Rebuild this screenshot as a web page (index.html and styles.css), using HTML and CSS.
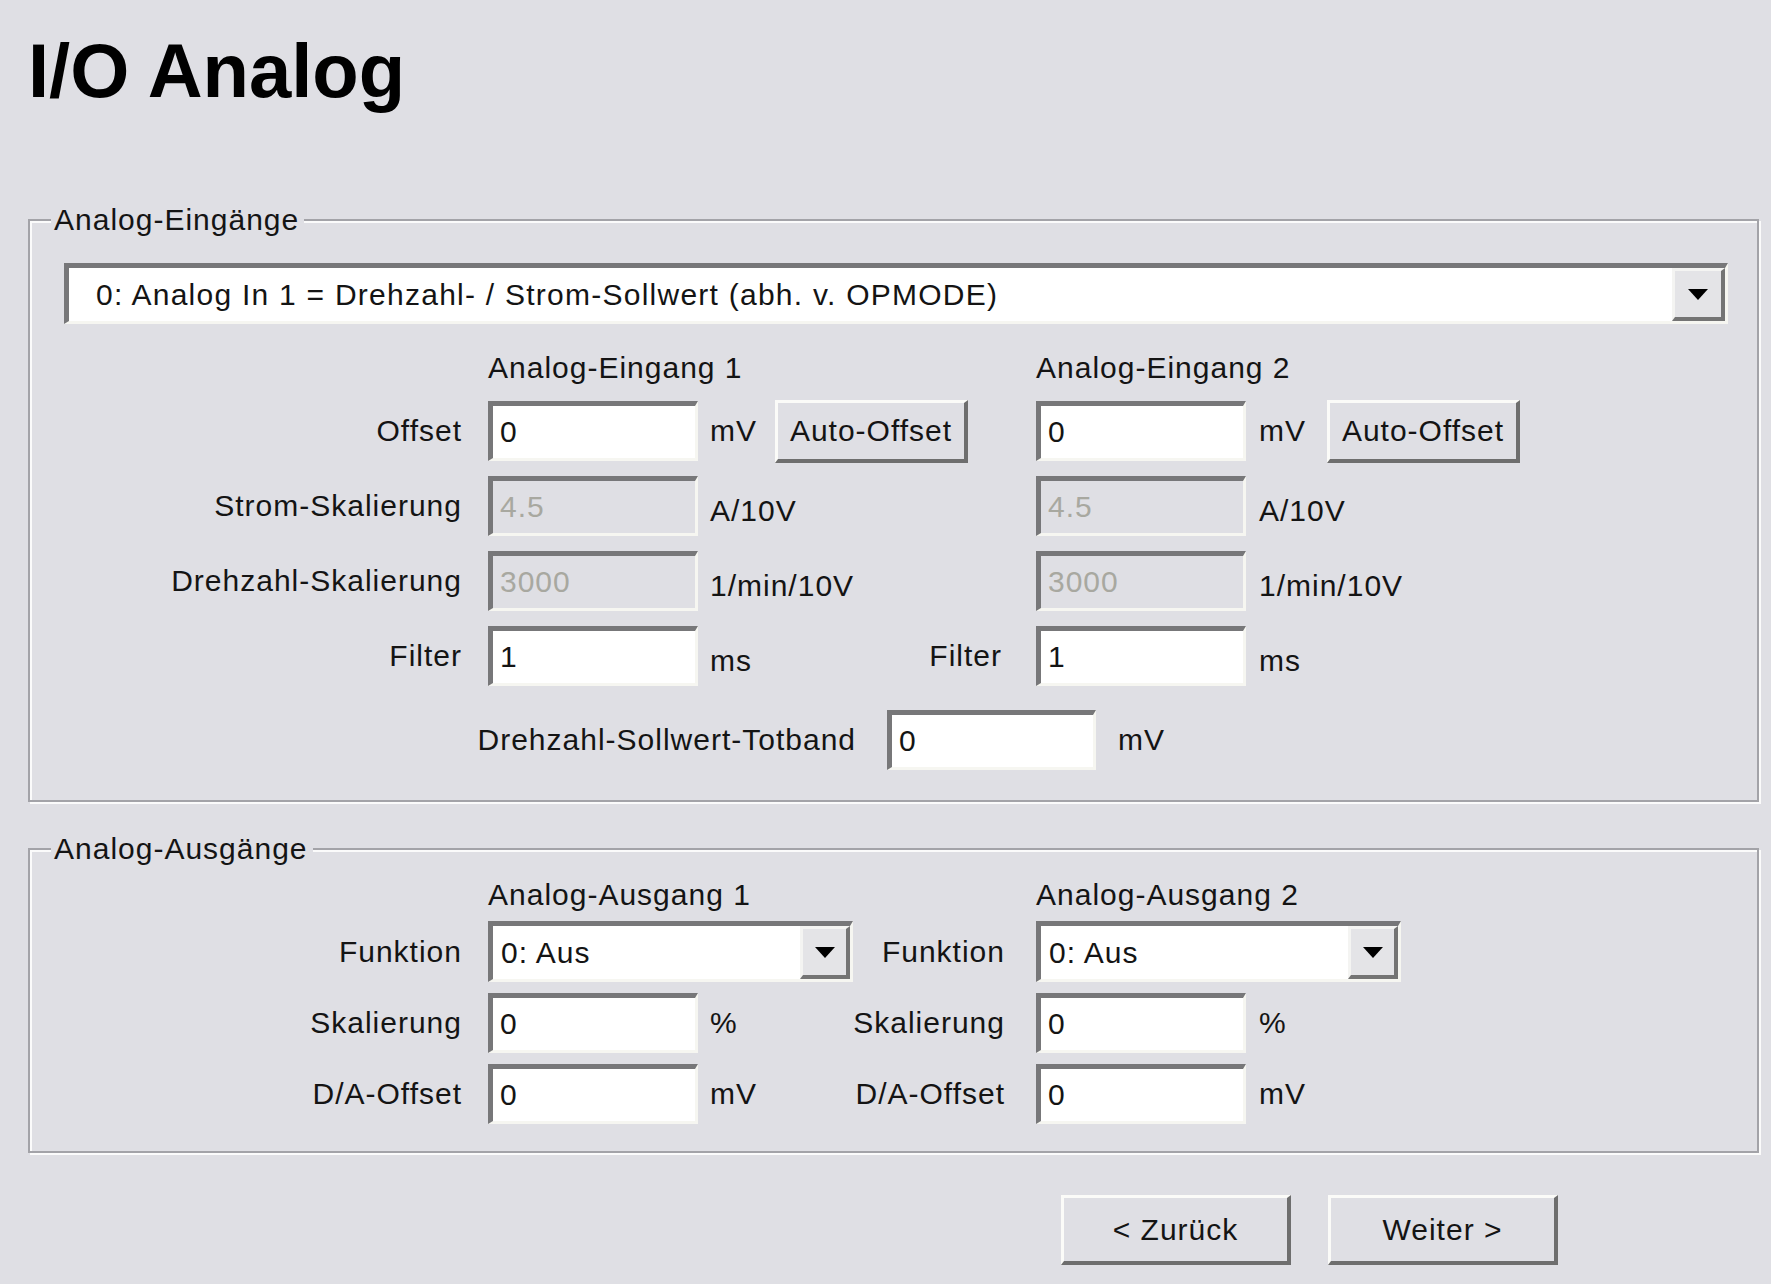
FILE: index.html
```html
<!DOCTYPE html>
<html lang="de">
<head>
    <meta charset="UTF-8">
    <title>I/O Analog</title>
    <link rel="stylesheet" href="styles.css">
</head>
<body>
    <div class="page">
        <h1 class="page-title">I/O Analog</h1>

        <fieldset class="group">
            <legend>Analog-Eingänge</legend>
            <div class="group-body group-in">
                <div class="combo combo-wide">
                    <span class="combo-text">0: Analog In 1 = Drehzahl- / Strom-Sollwert (abh. v. OPMODE)</span>
                    <span class="combo-btn"><svg width="20" height="11" viewBox="0 0 20 11"><path d="M0 0h20L10 11z" fill="#000"/></svg></span>
                </div>

                <div class="grid-in">
                    <div></div>
                    <div class="col-head">Analog-Eingang 1</div>
                    <div></div>
                    <div class="col-head">Analog-Eingang 2</div>
                    <div></div>

                    <label class="lbl">Offset</label>
                    <div class="pair"><input class="field" type="text" value="0"><span class="unit">mV</span></div>
                    <div class="cell"><button class="btn btn-auto">Auto-Offset</button></div>
                    <div class="pair"><input class="field" type="text" value="0"><span class="unit unit-2">mV</span></div>
                    <div class="cell"><button class="btn btn-auto">Auto-Offset</button></div>

                    <label class="lbl">Strom-Skalierung</label>
                    <div class="pair"><input class="field" type="text" value="4.5" disabled><span class="unit low">A/10V</span></div>
                    <div></div>
                    <div class="pair"><input class="field" type="text" value="4.5" disabled><span class="unit unit-2 low">A/10V</span></div>
                    <div></div>

                    <label class="lbl">Drehzahl-Skalierung</label>
                    <div class="pair"><input class="field" type="text" value="3000" disabled><span class="unit low">1/min/10V</span></div>
                    <div></div>
                    <div class="pair"><input class="field" type="text" value="3000" disabled><span class="unit unit-2 low">1/min/10V</span></div>
                    <div></div>

                    <label class="lbl">Filter</label>
                    <div class="pair"><input class="field" type="text" value="1"><span class="unit low">ms</span></div>
                    <label class="lbl lbl-2">Filter</label>
                    <div class="pair"><input class="field" type="text" value="1"><span class="unit unit-2 low">ms</span></div>
                    <div></div>
                </div>

                <div class="deadband">
                    <label class="lbl">Drehzahl-Sollwert-Totband</label>
                    <div class="pair"><input class="field" type="text" value="0"><span class="unit unit-db">mV</span></div>
                </div>
            </div>
        </fieldset>

        <fieldset class="group group-out">
            <legend>Analog-Ausgänge</legend>
            <div class="group-body">
                <div class="grid-out">
                    <div></div>
                    <div class="col-head">Analog-Ausgang 1</div>
                    <div></div>
                    <div class="col-head">Analog-Ausgang 2</div>

                    <label class="lbl">Funktion</label>
                    <div class="combo combo-small">
                        <span class="combo-text">0: Aus</span>
                        <span class="combo-btn"><svg width="20" height="11" viewBox="0 0 20 11"><path d="M0 0h20L10 11z" fill="#000"/></svg></span>
                    </div>
                    <label class="lbl lbl-2">Funktion</label>
                    <div class="combo combo-small">
                        <span class="combo-text">0: Aus</span>
                        <span class="combo-btn"><svg width="20" height="11" viewBox="0 0 20 11"><path d="M0 0h20L10 11z" fill="#000"/></svg></span>
                    </div>

                    <label class="lbl">Skalierung</label>
                    <div class="pair"><input class="field" type="text" value="0"><span class="unit">%</span></div>
                    <label class="lbl lbl-2">Skalierung</label>
                    <div class="pair"><input class="field" type="text" value="0"><span class="unit unit-2">%</span></div>

                    <label class="lbl">D/A-Offset</label>
                    <div class="pair"><input class="field" type="text" value="0"><span class="unit">mV</span></div>
                    <label class="lbl lbl-2">D/A-Offset</label>
                    <div class="pair"><input class="field" type="text" value="0"><span class="unit unit-2">mV</span></div>
                </div>
            </div>
        </fieldset>

        <div class="wizard-nav">
            <button class="btn btn-nav">&lt; Zurück</button>
            <button class="btn btn-nav">Weiter &gt;</button>
        </div>
    </div>
</body>
</html>
```

FILE: styles.css
```css
:root {
    --bg: #dfdfe4;
    --text: #141414;
    --shade: #777779;
    --light: #f6f6f1;
    --frame: #a3a3a8;
    --disabled: #a8a8a0;
}

* {
    box-sizing: border-box;
}

body {
    margin: 0;
    background: var(--bg);
    color: var(--text);
    font-family: "Liberation Sans", Arial, sans-serif;
    font-size: 30px;
    letter-spacing: 1px;
    line-height: 36px;
}

.page {
    padding: 33px 12px 19px 28px;
}

.page-title {
    margin: 0;
    font-size: 76px;
    line-height: 76px;
    font-weight: bold;
    letter-spacing: 0;
    color: #000;
}

/* group boxes */
.group {
    margin: 93px 0 0 0;
    padding: 0;
    border: 2px solid var(--frame);
    box-shadow: inset 2px 2px 0 #fbfbfb, 2px 2px 0 #fbfbfb;
    min-width: 0;
}

.group legend {
    margin-left: 21px;
    padding: 0 5px 0 3px;
    background: var(--bg);
    line-height: 36px;
}

.group-out {
    margin-top: 29px;
}

.group-body {
    padding: 13px 29px 27px 34px;
}

.group-in {
    padding-top: 25px;
    padding-bottom: 30px;
}

/* sunken controls */
.field,
.combo {
    border-style: solid;
    border-width: 5px 3px 3px 5px;
    border-color: var(--shade) var(--light) var(--light) var(--shade);
    background: #fff;
}

.field {
    width: 210px;
    height: 60px;
    padding: 0 0 0 7px;
    font: inherit;
    letter-spacing: 1px;
    color: var(--text);
    outline: none;
}

.field:disabled {
    background: var(--bg);
    color: var(--disabled);
}

.combo {
    display: flex;
    align-items: center;
    height: 61px;
}

.combo-wide {
    width: 1664px;
}

.combo-small {
    width: 365px;
}

.combo-text {
    flex: 1;
    white-space: nowrap;
    overflow: hidden;
}

.combo-wide .combo-text {
    padding-left: 27px;
    letter-spacing: 1.25px;
}

.combo-small .combo-text {
    padding-left: 8px;
}

.combo-btn {
    display: flex;
    align-items: center;
    justify-content: center;
    width: 53px;
    height: 53px;
    border-style: solid;
    border-width: 3px 4px 4px 3px;
    border-color: #f4f4f2 #747474 #747474 #f4f4f2;
    background: #e4e4e7;
}

.combo-small .combo-btn {
    width: 50px;
}

/* raised buttons */
.btn {
    border-style: solid;
    border-width: 3px 4px 4px 3px;
    border-color: #fbfbf8 #6e6e6e #6e6e6e #fbfbf8;
    background: var(--bg);
    font: inherit;
    letter-spacing: 1px;
    color: var(--text);
    padding: 0;
}

.btn-auto {
    width: 193px;
    height: 63px;
}

.btn-nav {
    width: 230px;
    height: 70px;
}

/* layouts */
.grid-in {
    display: grid;
    grid-template-columns: 424px 287px 261px 291px 194px;
    grid-template-rows: 36px repeat(4, 60px);
    row-gap: 15px;
    margin-top: 26px;
}

.grid-out {
    display: grid;
    grid-template-columns: 424px 365px 183px 365px;
    grid-template-rows: 30px 61px 60px 60px;
    row-gap: 11px;
}

.col-head {
    white-space: nowrap;
    line-height: 30px;
}

.grid-in .col-head {
    line-height: 36px;
}

.lbl {
    display: flex;
    align-items: center;
    justify-content: flex-end;
    padding-right: 26px;
    white-space: nowrap;
}

.lbl-2 {
    padding-right: 31px;
}

.grid-in .lbl-2 {
    padding-right: 34px;
}

.pair {
    display: flex;
    align-items: center;
}

.cell {
    display: flex;
    align-items: center;
}

.unit {
    margin-left: 12px;
    white-space: nowrap;
}

.unit-2 {
    margin-left: 13px;
}

.unit.low {
    padding-top: 9px;
}

.deadband {
    display: grid;
    grid-template-columns: 823px auto;
    height: 60px;
    margin-top: 24px;
}

.deadband .lbl {
    padding-right: 31px;
}

.deadband .field {
    width: 209px;
}

.unit-db {
    margin-left: 22px;
}

.wizard-nav {
    display: flex;
    gap: 37px;
    padding-left: 1033px;
    margin-top: 42px;
}
```
